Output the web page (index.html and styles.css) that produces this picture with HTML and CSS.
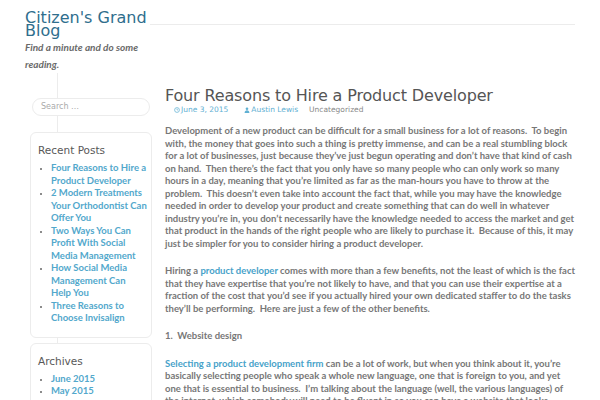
FILE: index.html
```html
<!DOCTYPE html>
<html>
<head>
<meta charset="utf-8">
<link rel="stylesheet" href="styles.css">
</head>
<body>
<header class="site-header">
  <div class="branding">
    <h1 class="site-title">Citizen's Grand Blog</h1>
    <p class="tagline">Find a minute and do some reading.</p>
  </div>
  <div class="header-rule"></div>
</header>
<div class="layout">
  <aside class="sidebar">
    <div class="search">Search …</div>
    <section class="widget">
      <h2 class="widget-title">Recent Posts</h2>
      <ul class="widget-list">
        <li><a href="#">Four Reasons to Hire a Product Developer</a></li>
        <li><a href="#">2 Modern Treatments Your Orthodontist Can Offer You</a></li>
        <li><a href="#">Two Ways You Can Profit With Social Media Management</a></li>
        <li><a href="#">How Social Media Management Can Help You</a></li>
        <li><a href="#">Three Reasons to Choose Invisalign</a></li>
      </ul>
    </section>
    <section class="widget">
      <h2 class="widget-title">Archives</h2>
      <ul class="widget-list">
        <li><a href="#">June 2015</a></li>
        <li><a href="#">May 2015</a></li>
        <li><a href="#">April 2015</a></li>
      </ul>
    </section>
  </aside>
  <main class="content">
    <h2 class="entry-title">Four Reasons to Hire a Product Developer</h2>
    <div class="entry-meta">
      <span class="meta-date"><svg class="ico" viewBox="0 0 10 10"><circle cx="5" cy="5" r="4" fill="none" stroke="currentColor" stroke-width="1.2"/><path d="M5 2.6V5h1.8" fill="none" stroke="currentColor" stroke-width="1"/></svg>June 3, 2015</span>
      <span class="meta-author"><svg class="ico" viewBox="0 0 10 10"><circle cx="5" cy="3" r="2.2" fill="currentColor"/><path d="M1 10c0-3 1.8-4.4 4-4.4S9 7 9 10z" fill="currentColor"/></svg>Austin Lewis</span>
      <span class="meta-cat">Uncategorized</span>
    </div>
    <div class="entry-content">
      <p>Development of a new product can be difficult for a small business for a lot of reasons.&nbsp; To begin with, the money that goes into such a thing is pretty immense, and can be a real stumbling block for a lot of businesses, just because they’ve just begun operating and don’t have that kind of cash on hand.&nbsp; Then there’s the fact that you only have so many people who can only work so many hours in a day, meaning that you’re limited as far as the man-hours you have to throw at the problem.&nbsp; This doesn’t even take into account the fact that, while you may have the knowledge needed in order to develop your product and create something that can do well in whatever industry you’re in, you don’t necessarily have the knowledge needed to access the market and get that product in the hands of the right people who are likely to purchase it.&nbsp; Because of this, it may just be simpler for you to consider hiring a product developer.</p>
      <p>Hiring a <a href="#">product developer</a> comes with more than a few benefits, not the least of which is the fact that they have expertise that you’re not likely to have, and that you can use their expertise at a fraction of the cost that you’d see if you actually hired your own dedicated staffer to do the tasks they’ll be performing.&nbsp; Here are just a few of the other benefits.</p>
      <p>1.&nbsp; Website design</p>
      <p><a href="#">Selecting a product development firm</a> can be a lot of work, but when you think about it, you’re basically selecting people who speak a whole new language, one that is foreign to you, and yet one that is essential to business.&nbsp; I’m talking about the language (well, the various languages) of the internet, which somebody will need to be fluent in so you can have a website that looks professional and works well.</p>
    </div>
  </main>
</div>
</body>
</html>
```
FILE: styles.css
```css
html, body {
  margin: 0;
  padding: 0;
  background: #fff;
  overflow: hidden;
}
body {
  width: 600px;
  height: 400px;
  font-family: Lato, "Open Sans", sans-serif;
  color: #707070;
}
a { color: #47a2c9; text-decoration: none; }

.site-header {
  display: flex;
  align-items: flex-start;
  padding: 11px 25px 0 25px;
}
.branding { width: 125px; }
.site-title {
  margin: 0;
  font-family: "DejaVu Sans", sans-serif;
  font-weight: normal;
  font-size: 16px;
  line-height: 13px;
  color: #2f6e8d;
}
.tagline {
  margin: 2px 0 0 0;
  font-family: Lato, sans-serif;
  font-style: italic;
  font-weight: bold;
  font-size: 10px;
  line-height: 17px;
  color: #6a6a6a;
}
.header-rule {
  flex: 1;
  height: 1px;
  margin-top: 13px;
  background: #ececec;
}

.layout {
  display: flex;
  align-items: flex-start;
  padding-left: 30px;
}
.sidebar {
  width: 122px;
  flex: none;
  padding-top: 25px;
  min-height: 340px;
  background: linear-gradient(#ececec, #ececec) no-repeat 27px 0 / 1px 100%;
}
.search {
  margin: 0 2px 16px 2px;
  height: 16px;
  border: 1px solid #ececec;
  border-radius: 9px;
  background: #fff;
  font-family: "DejaVu Sans", sans-serif;
  font-size: 8px;
  line-height: 16px;
  color: #aaa;
  padding-left: 8px;
}
.widget {
  background: #fff;
  border: 1px solid #ececec;
  border-radius: 6px;
  padding: 9px 4px 12px 7px;
  margin-bottom: 5px;
}
.widget-title {
  margin: 0 0 3px 0;
  font-family: "DejaVu Sans", sans-serif;
  font-weight: normal;
  font-size: 10.5px;
  line-height: 17px;
  color: #585858;
}
.widget-list {
  margin: 0;
  padding-left: 13px;
  font-family: Lato, sans-serif;
  font-weight: bold;
  font-size: 9.5px;
  line-height: 12.5px;
  color: #555;
}
.widget-list li::marker { font-size: 7px; color: #666; }
.widget-list a { color: #52a8cc; }

.content {
  flex: 1;
  padding: 13px 22px 0 13px;
}
.entry-title {
  margin: 0;
  font-family: "DejaVu Sans", sans-serif;
  font-weight: normal;
  font-size: 16px;
  letter-spacing: -0.15px;
  line-height: 19px;
  color: #555;
}
.entry-meta {
  display: flex;
  gap: 11px;
  padding-left: 9px;
  font-family: "DejaVu Sans", sans-serif;
  font-size: 7.5px;
  line-height: 10px;
  color: #888;
}
.meta-date, .meta-author { color: #5fb0d3; display: flex; align-items: center; gap: 1px; }
.meta-author { margin-left: 5px; }
.ico { width: 6px; height: 6px; }
.entry-content {
  margin-top: 10px;
  font-size: 9.5px;
  line-height: 12.5px;
  font-weight: bold;
  color: #777;
}
.entry-content p { margin: 0 0 15px 0; }
```
